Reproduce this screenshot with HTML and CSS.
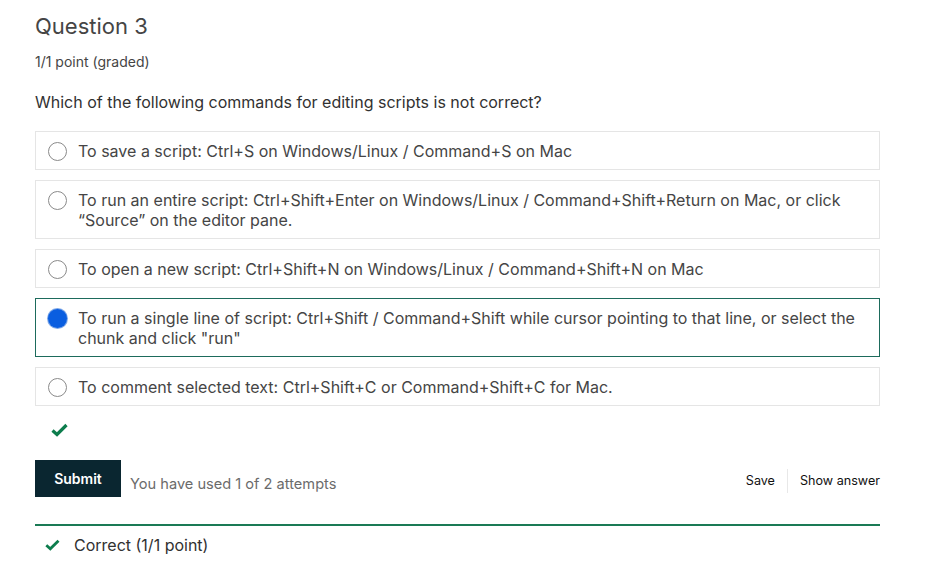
FILE: index.html
```html
<!DOCTYPE html>
<html>
<head>
<meta charset="utf-8">
<link rel="stylesheet" href="styles.css">
</head>
<body>
<div class="problem">
  <h2 class="title">Question 3</h2>
  <div class="points">1/1 point (graded)</div>
  <p class="prompt">Which of the following commands for editing scripts is not correct?</p>
  <div class="options">
    <label class="option"><span class="radio"></span><span class="otext">To save a script: Ctrl+S on Windows/Linux / Command+S on Mac</span></label>
    <label class="option"><span class="radio"></span><span class="otext">To run an entire script: Ctrl+Shift+Enter on Windows/Linux / Command+Shift+Return on Mac, or click “Source” on the editor pane.</span></label>
    <label class="option"><span class="radio"></span><span class="otext">To open a new script: Ctrl+Shift+N on Windows/Linux / Command+Shift+N on Mac</span></label>
    <label class="option selected"><span class="radio checked"></span><span class="otext">To run a single line of script: Ctrl+Shift / Command+Shift while cursor pointing to that line, or select the chunk and click "run"</span></label>
    <label class="option"><span class="radio"></span><span class="otext">To comment selected text: Ctrl+Shift+C or Command+Shift+C for Mac.</span></label>
  </div>
  <div class="status">
    <svg width="17" height="14" viewBox="0 0 17 14"><path d="M1.5 7.5 L6 11.5 L15.5 2" fill="none" stroke="#0d7d4d" stroke-width="3.2"/></svg>
  </div>
  <div class="actions">
    <div class="left">
      <button class="submit">Submit</button>
      <span class="attempts">You have used 1 of 2 attempts</span>
    </div>
    <div class="right">
      <span class="link">Save</span>
      <span class="sep"></span>
      <span class="link">Show answer</span>
    </div>
  </div>
  <div class="notice">
    <svg width="15" height="12" viewBox="0 0 15 12"><path d="M1.3 6.3 L5.3 9.8 L13.5 1.8" fill="none" stroke="#0d7d4d" stroke-width="2.8"/></svg>
    <span>Correct (1/1 point)</span>
  </div>
</div>
</body>
</html>
```

FILE: styles.css
```css
html, body {
  margin: 0;
  padding: 0;
  background: #fff;
}
body {
  font-family: Inter, "Noto Sans", sans-serif;
  color: #313131;
}
.problem {
  width: 845px;
  margin-left: 35px;
}
.title {
  margin: 0;
  padding-top: 11px;
  font-size: 22px;
  font-weight: 400;
  line-height: 30px;
  color: #454545;
}
.points {
  margin-top: 12px;
  font-size: 14px;
  line-height: 18px;
  color: #454545;
}
.prompt {
  margin: 20px 0 0;
  font-size: 16px;
  line-height: 22px;
  color: #313131;
}
.options {
  margin-top: 18px;
  display: flex;
  flex-direction: column;
  gap: 10px;
}
.option {
  display: flex;
  align-items: flex-start;
  border: 1px solid #e5e5e5;
  padding: 9px 12px 8px 12px;
  font-size: 16px;
  line-height: 20px;
  color: #454545;
}
.option.selected {
  border-color: #1d6b5c;
}
.radio {
  flex: none;
  width: 19px;
  height: 19px;
  border: 1px solid #8a8a8a;
  border-radius: 50%;
  box-sizing: border-box;
  margin: 1px 11px 0 0;
}
.radio.checked {
  border: none;
  background: #0a5ee0;
  box-shadow: 0 0 0 1px #7ea8e8;
}
.otext {
  display: block;
}
.status {
  height: 54px;
  padding-left: 16px;
  padding-top: 17px;
  box-sizing: border-box;
}
.status svg {
  display: block;
}
.actions {
  display: flex;
  justify-content: space-between;
  align-items: center;
  height: 37px;
}
.left {
  display: flex;
  align-items: center;
}
.submit {
  height: 37px;
  width: 86px;
  border: none;
  background: #0a2630;
  color: #fff;
  font-family: Inter, sans-serif;
  font-weight: 600;
  font-size: 14px;
  padding: 0;
}
.attempts {
  margin-left: 9px;
  margin-top: 11px;
  font-size: 14.6px;
  color: #6b6b6b;
}
.right {
  display: flex;
  align-items: center;
  padding-top: 4px;
  font-size: 12.6px;
  color: #111;
}
.sep {
  width: 1px;
  height: 24px;
  background: #e8e8e8;
  margin: 0 12px;
}
.link {
  line-height: 18px;
}
.notice {
  margin-top: 27px;
  border-top: 2px solid #1a7a55;
  display: flex;
  align-items: center;
  padding: 9px 0 0 10px;
  font-size: 16px;
  line-height: 20px;
  color: #313131;
}
.notice svg {
  margin-right: 14px;
}
```
